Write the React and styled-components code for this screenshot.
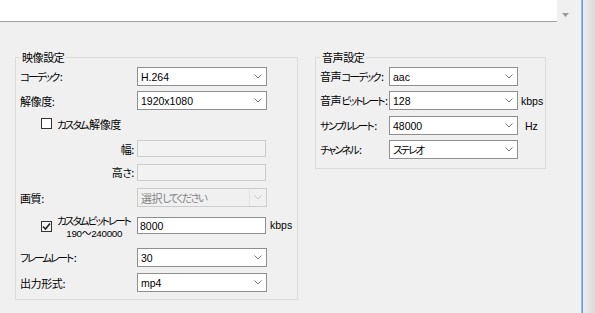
import React from "react";
import styled, { createGlobalStyle } from "styled-components";

const Global = createGlobalStyle`
  html, body { margin: 0; padding: 0; background: #f0f0f0; }
  body {
    font-family: "Noto Sans CJK JP", sans-serif;
    font-size: 11px;
    color: #000;
    font-feature-settings: "palt";
  }
  * { box-sizing: border-box; }
`;

const Window = styled.div`
  width: 595px;
  height: 313px;
  display: flex;
  background: #f0f0f0;
  overflow: hidden;
`;

const Main = styled.div`
  width: 581px;
  flex: none;
  display: flex;
  flex-direction: column;
`;

const Edge = styled.div`
  width: 2px;
  flex: none;
  background: linear-gradient(90deg, #a9caec, #4b91d8);
`;

const Shade = styled.div`
  flex: 1;
  background: linear-gradient(90deg, #ececec, #dadada);
`;

const TopBar = styled.div`
  display: flex;
  height: 22px;
`;

const Pane = styled.div`
  width: 557px;
  height: 22px;
  background: #fff;
  border-bottom: 1px solid #a0a0a0;
`;

const ScrollArrow = styled.div`
  padding: 12px 0 0 5px;
  line-height: 0;
`;

const Groups = styled.div`
  display: flex;
  align-items: flex-start;
  gap: 17px;
  padding: 28px 0 0 15px;
`;

const Group = styled.fieldset`
  margin: 0;
  min-width: 0;
  width: ${(p) => p.$w}px;
  padding: 3px 0 ${(p) => p.$pb}px 4px;
  border: 1px solid #dcdcdc;
  display: flex;
  flex-direction: column;
`;

const Legend = styled.legend`
  padding: 0 2px;
  line-height: 14px;
  font-size: 11px;
  letter-spacing: -0.4px;
`;

const Kana = styled.span`
  font-size: 10.5px;
  letter-spacing: -1.9px;
  padding-right: 1.5px;
`;

const jp = (text) =>
  text
    .split(/([\u3041-\u30ff]+)/)
    .filter(Boolean)
    .map((s, i) => (/[\u3041-\u30ff]/.test(s) ? <Kana key={i}>{s}</Kana> : s));

const Row = styled.div`
  display: flex;
  align-items: ${(p) => (p.$top ? "flex-start" : "center")};
  height: ${(p) => p.$h || 19}px;
  margin-top: ${(p) => p.$mt || 0}px;
`;

const Label = styled.span`
  flex: none;
  width: ${(p) => p.$w}px;
  text-align: ${(p) => (p.$right ? "right" : "left")};
  padding-right: ${(p) => (p.$right ? 3 : 0)}px;
  white-space: nowrap;
  line-height: 14px;
  letter-spacing: -0.4px;
`;

const CheckCell = styled.div`
  flex: none;
  width: ${(p) => p.$w}px;
  display: flex;
  align-items: ${(p) => (p.$top ? "flex-start" : "center")};
  gap: 5px;
  padding-left: 21px;
  letter-spacing: -0.4px;
  white-space: nowrap;
`;

const Box = styled.span`
  flex: none;
  width: 11px;
  height: 11px;
  border: 1px solid #333;
  background: ${(p) => (p.$checked ? "#f4f4f4" : "#fff")};
  margin-top: ${(p) => p.$mt || 0}px;
  display: flex;
  align-items: center;
  justify-content: center;
`;

const TwoLine = styled.div`
  display: flex;
  flex-direction: column;
  align-items: center;
  line-height: 13px;
  white-space: nowrap;
`;

const Range = styled.span`
  font-family: "Liberation Sans", "Noto Sans CJK JP", sans-serif;
  font-size: 9.8px;
  letter-spacing: -0.3px;
`;

const SelectBox = styled.div`
  flex: none;
  width: ${(p) => p.$w}px;
  height: 19px;
  display: flex;
  align-items: stretch;
  border: 1px solid ${(p) => (p.$disabled ? "#cccccc" : "#8f8f8f")};
  background: ${(p) => (p.$disabled ? "#f0f0f0" : "#fff")};
`;

const Value = styled.span`
  flex: 1;
  display: flex;
  align-items: center;
  padding-left: 3px;
  white-space: nowrap;
  font-family: ${(p) =>
    p.$jp ? `"Noto Sans CJK JP", sans-serif` : `"Liberation Sans", "Noto Sans CJK JP", sans-serif`};
  font-size: ${(p) => (p.$jp ? 11 : 10.5)}px;
  letter-spacing: ${(p) => (p.$jp ? -0.4 : 0)}px;
  color: ${(p) => (p.$disabled ? "#838383" : "#000")};
`;

const DropButton = styled.span`
  flex: none;
  width: 17px;
  display: flex;
  align-items: center;
  justify-content: center;
  border-left: 1px solid ${(p) => (p.$disabled ? "#e2e2e2" : "transparent")};
`;

const TextBox = styled.input`
  flex: none;
  width: ${(p) => p.$w}px;
  height: 17px;
  margin: ${(p) => p.$mt || 0}px 0 0 0;
  padding: 0 0 0 2px;
  border: 1px solid ${(p) => (p.disabled ? "#cccccc" : "#8f8f8f")};
  background: ${(p) => (p.disabled ? "#f2f2f2" : "#fff")};
  font-family: "Liberation Sans", "Noto Sans CJK JP", sans-serif;
  font-size: 10.5px;
  color: #000;
  outline: none;
`;

const Unit = styled.span`
  padding-left: ${(p) => p.$pl}px;
  margin-top: ${(p) => p.$mt || 0}px;
  font-family: "Liberation Sans", sans-serif;
  font-size: 10.5px;
  white-space: nowrap;
`;

const Chevron = ({ disabled }) => (
  <svg width="8" height="5" viewBox="0 0 8 5">
    <polyline
      points="0.5,0.5 4,4 7.5,0.5"
      fill="none"
      stroke={disabled ? "#c4c4c4" : "#7a7a7a"}
      strokeWidth="1"
    />
  </svg>
);

const Select = ({ w, value, isJp, disabled }) => (
  <SelectBox $w={w} $disabled={disabled}>
    <Value $jp={isJp} $disabled={disabled}>
      {isJp ? jp(value) : value}
    </Value>
    <DropButton $disabled={disabled}>
      <Chevron disabled={disabled} />
    </DropButton>
  </SelectBox>
);

const Check = ({ checked, mt }) => (
  <Box $checked={checked} $mt={mt}>
    {checked && (
      <svg width="9" height="9" viewBox="0 0 9 9">
        <polyline points="1,4.5 3.5,7 8,1.5" fill="none" stroke="#222" strokeWidth="1.6" />
      </svg>
    )}
  </Box>
);

export default function App() {
  return (
    <>
      <Global />
      <Window>
        <Main>
          <TopBar>
            <Pane />
            <ScrollArrow>
              <svg width="7" height="4" viewBox="0 0 7 4">
                <polygon points="0,0 7,0 3.5,4" fill="#9a9a9a" />
              </svg>
            </ScrollArrow>
          </TopBar>
          <Groups>
            <Group $w={283} $pb={7}>
              <Legend>映像設定</Legend>
              <Row>
                <Label $w={117}>{jp("コーデック:")}</Label>
                <Select w={130} value="H.264" />
              </Row>
              <Row $mt={5}>
                <Label $w={117}>解像度:</Label>
                <Select w={130} value="1920x1080" />
              </Row>
              <Row $mt={4}>
                <CheckCell $w={117}>
                  <Check />
                  <span>{jp("カスタム解像度")}</span>
                </CheckCell>
              </Row>
              <Row $mt={7} $h={17}>
                <Label $w={117} $right>
                  幅:
                </Label>
                <TextBox $w={129} disabled defaultValue="" />
              </Row>
              <Row $mt={7} $h={17}>
                <Label $w={117} $right>
                  {jp("高さ:")}
                </Label>
                <TextBox $w={129} disabled defaultValue="" />
              </Row>
              <Row $mt={7}>
                <Label $w={117}>画質:</Label>
                <Select w={130} value="選択してください" isJp disabled />
              </Row>
              <Row $mt={7} $h={26} $top>
                <CheckCell $w={117} $top>
                  <Check checked mt={7} />
                  <TwoLine>
                    <span>{jp("カスタムビットレート")}</span>
                    <Range>190〜240000</Range>
                  </TwoLine>
                </CheckCell>
                <TextBox $w={129} $mt={3} readOnly defaultValue="8000" />
                <Unit $pl={4} $mt={5}>
                  kbps
                </Unit>
              </Row>
              <Row $mt={8}>
                <Label $w={117}>{jp("フレームレート:")}</Label>
                <Select w={130} value="30" />
              </Row>
              <Row $mt={6}>
                <Label $w={117}>出力形式:</Label>
                <Select w={130} value="mp4" />
              </Row>
            </Group>
            <Group $w={231} $pb={9}>
              <Legend>音声設定</Legend>
              <Row>
                <Label $w={69}>{jp("音声コーデック:")}</Label>
                <Select w={129} value="aac" />
              </Row>
              <Row $mt={5}>
                <Label $w={69}>{jp("音声ビットレート:")}</Label>
                <Select w={129} value="128" />
                <Unit $pl={3}>kbps</Unit>
              </Row>
              <Row $mt={6}>
                <Label $w={69}>{jp("サンプルレート:")}</Label>
                <Select w={129} value="48000" />
                <Unit $pl={7}>Hz</Unit>
              </Row>
              <Row $mt={5}>
                <Label $w={69}>{jp("チャンネル:")}</Label>
                <Select w={129} value="ステレオ" isJp />
              </Row>
            </Group>
          </Groups>
        </Main>
        <Edge />
        <Shade />
      </Window>
    </>
  );
}
